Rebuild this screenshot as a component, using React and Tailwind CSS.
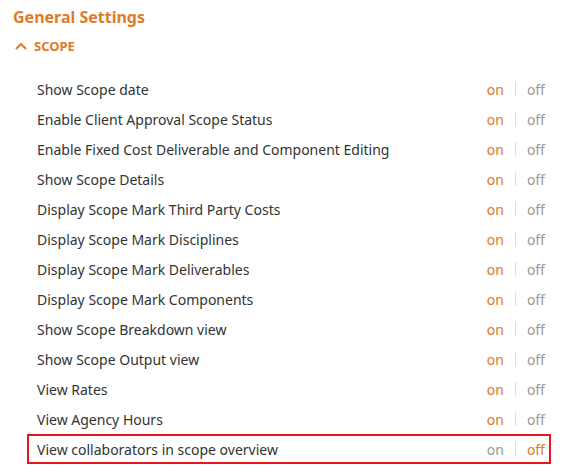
import React from "react";

const rows = [
  "Show Scope date",
  "Enable Client Approval Scope Status",
  "Enable Fixed Cost Deliverable and Component Editing",
  "Show Scope Details",
  "Display Scope Mark Third Party Costs",
  "Display Scope Mark Disciplines",
  "Display Scope Mark Deliverables",
  "Display Scope Mark Components",
  "Show Scope Breakdown view",
  "Show Scope Output view",
  "View Rates",
  "View Agency Hours",
  "View collaborators in scope overview",
];

function Toggle({ on }) {
  return (
    <div className="flex items-center text-[14px]">
      <span className={on ? "text-[#e07a26]" : "text-[#9a9a9a]"}>on</span>
      <span className="mx-[11px] h-[14px] w-px bg-[#dedede]" />
      <span className={on ? "text-[#9a9a9a]" : "text-[#e07a26]"}>off</span>
    </div>
  );
}

export default function App() {
  return (
    <div className="min-h-[469px] w-[570px] bg-white font-['Noto_Sans',sans-serif] text-[#333]">
      <h1 className="pl-[13px] pt-[5px] text-[16px] font-bold leading-[24px] text-[#e07a26]">
        General Settings
      </h1>
      <div className="mt-[8px] flex items-center pl-[15px] text-[#e07a26]">
        <svg width="12" height="8" viewBox="0 0 12 8" fill="none">
          <path d="M1 7 L6 2 L11 7" stroke="currentColor" strokeWidth="2" />
        </svg>
        <span className="ml-[7px] text-[13px] font-bold leading-[18px]">SCOPE</span>
      </div>
      <div className="mt-[19px] pl-[27px] pr-[19px]">
        {rows.map((label, i) => {
          const last = i === rows.length - 1;
          return (
            <div
              key={label}
              className={
                "flex h-[30px] items-center justify-between border-2 pl-[8px] pr-[4px] " +
                (last ? "border-[#e8141b]" : "border-transparent")
              }
            >
              <span className="text-[14px]">{label}</span>
              <Toggle on={!last} />
            </div>
          );
        })}
      </div>
    </div>
  );
}
